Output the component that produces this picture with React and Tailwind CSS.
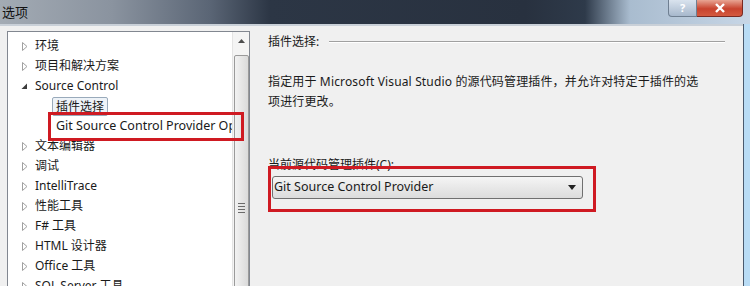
import React from "react";

const font = { fontFamily: '"Noto Sans", "Noto Sans CJK SC", sans-serif' };

const treeItems = [
  { label: "环境", kind: "closed" },
  { label: "项目和解决方案", kind: "closed" },
  { label: "Source Control", kind: "open" },
  { label: "插件选择", kind: "child", selected: true },
  { label: "Git Source Control Provider Options", kind: "child" },
  { label: "文本编辑器", kind: "closed" },
  { label: "调试", kind: "closed" },
  { label: "IntelliTrace", kind: "closed" },
  { label: "性能工具", kind: "closed" },
  { label: "F# 工具", kind: "closed" },
  { label: "HTML 设计器", kind: "closed" },
  { label: "Office 工具", kind: "closed" },
  { label: "SQL Server 工具", kind: "closed" },
];

function Arrow({ kind }) {
  if (kind === "open") {
    return (
      <svg width="7" height="7" viewBox="0 0 7 7" className="shrink-0">
        <path d="M6 0.5 L6 6 L0.5 6 Z" fill="#3c3c3c" />
      </svg>
    );
  }
  return (
    <svg width="6" height="9" viewBox="0 0 6 9" className="shrink-0">
      <path d="M0.5 0.5 L5 4.5 L0.5 8.5 Z" fill="#fff" stroke="#a0a0a0" />
    </svg>
  );
}

function TreeRow({ item }) {
  if (item.kind === "child") {
    return (
      <div className="h-[20px] flex items-center pl-[44px] whitespace-nowrap">
        <span
          className={
            item.selected
              ? "px-[3px] h-[19px] leading-[17px] border border-[#9ab] bg-[#eef3f8] rounded-[2px]"
              : "px-[4px] text-[12.5px]"
          }
        >
          {item.label}
        </span>
      </div>
    );
  }
  return (
    <div className="h-[20px] flex items-center whitespace-nowrap">
      <div className="w-[27px] flex justify-end pr-[7px]">
        <Arrow kind={item.kind} />
      </div>
      <span>{item.label}</span>
    </div>
  );
}

export default function App() {
  return (
    <div
      className="w-[750px] h-[286px] overflow-hidden relative bg-[#f0f0f0] text-[12px] text-[#1a1a1a]"
      style={font}
    >
      {/* title bar */}
      <div className="h-[24px] relative bg-[linear-gradient(90deg,#a3abb4_0%,#8a939f_15%,#5a6575_28%,#2c3645_36%,#28313f_70%,#2e3a4a_78%,#a9bccf_84%,#c7d6e6_100%)] flex items-start">
        <span className="pl-[2px] pt-[3px] text-[13px] text-[#111]">选项</span>
        <div className="absolute right-[7px] top-0 flex">
          <div className="w-[29px] h-[17px] rounded-bl-[4px] border border-[#6f7f91] border-t-0 bg-[linear-gradient(180deg,#d9e3ee,#a7b8cc)] flex items-center justify-center text-[11px] text-[#fff] font-bold">
            ?
          </div>
          <div className="w-[46px] h-[17px] rounded-br-[4px] border border-[#7a2a22] border-t-0 border-l-0 bg-[linear-gradient(180deg,#e8a593,#c8432e_55%,#d45a40)] flex items-center justify-center">
            <svg width="12" height="10" viewBox="0 0 12 10">
              <path d="M2 1 L10 9 M10 1 L2 9" stroke="#fff" strokeWidth="2.4" />
            </svg>
          </div>
        </div>
      </div>
      <div className="h-[2px] bg-[#c9d0d8]" />

      <div className="flex pt-[5px] pl-[7px] pr-[10px]">
        {/* left tree */}
        <div className="w-[243px] h-[260px] border border-[#828790] bg-white flex relative">
          <div className="flex-1 pt-[4px] overflow-hidden">
            {treeItems.map((it) => (
              <TreeRow key={it.label} item={it} />
            ))}
          </div>
          <div className="w-[17px] bg-[#f4f4f4] border-l border-[#e4e4e4] flex flex-col items-center">
            <div className="h-[18px] w-full flex items-center justify-center">
              <svg width="7" height="4" viewBox="0 0 7 4">
                <path d="M0 4 L3.5 0 L7 4 Z" fill="#4d4d4d" />
              </svg>
            </div>
            <div className="mt-[5px] w-[15px] flex-1 border border-[#9a9a9a] rounded-[2px] bg-[linear-gradient(90deg,#f2f2f2,#dadada)] flex flex-col items-center pt-[147px] gap-[2px]">
              <div className="w-[7px] h-px bg-[#6a6a6a]" />
              <div className="w-[7px] h-px bg-[#6a6a6a]" />
              <div className="w-[7px] h-px bg-[#6a6a6a]" />
              <div className="w-[7px] h-px bg-[#6a6a6a]" />
            </div>
          </div>
        </div>

        {/* right panel */}
        <div className="flex-1 pl-[18px] pt-[2px]">
          <div className="flex items-center h-[18px]">
            <span>插件选择:</span>
            <div className="flex-1 ml-[10px] mr-[15px] border-t border-[#a0a0a0] border-b-white border-b" />
          </div>
          <p className="mt-[21px] leading-[20px] whitespace-nowrap tracking-[0.15px]">
            指定用于 Microsoft Visual Studio 的源代码管理插件，并允许对特定于插件的选
            <br />
            项进行更改。
          </p>
          <div className="mt-[45px] leading-[16px]">当前源代码管理插件(C):</div>
          <div className="mt-[3px] ml-[4px] w-[311px] h-[23px] border border-[#707070] rounded-[3px] bg-[linear-gradient(180deg,#f5f5f5,#e8e8e8_50%,#dcdcdc)] flex items-center justify-between pl-[1px] pr-[6px]">
            <span className="text-[12.5px]">Git Source Control Provider</span>
            <svg width="8" height="5" viewBox="0 0 8 5">
              <path d="M0 0 L8 0 L4 5 Z" fill="#222" />
            </svg>
          </div>
        </div>
      </div>

      {/* right window frame edge */}
      <div className="absolute right-[6px] top-[24px] bottom-0 w-px bg-[#4a5a6e]" />
      <div className="absolute right-0 top-[24px] bottom-0 w-[6px] bg-[#b9dcf5]" />

      {/* red annotation boxes */}
      <div className="absolute left-[48px] top-[112px] w-[196px] h-[29px] border-[3px] border-[#cf1a22]" />
      <div className="absolute left-[268px] top-[166px] w-[328px] h-[46px] border-[3px] border-[#cf1a22]" />
    </div>
  );
}
